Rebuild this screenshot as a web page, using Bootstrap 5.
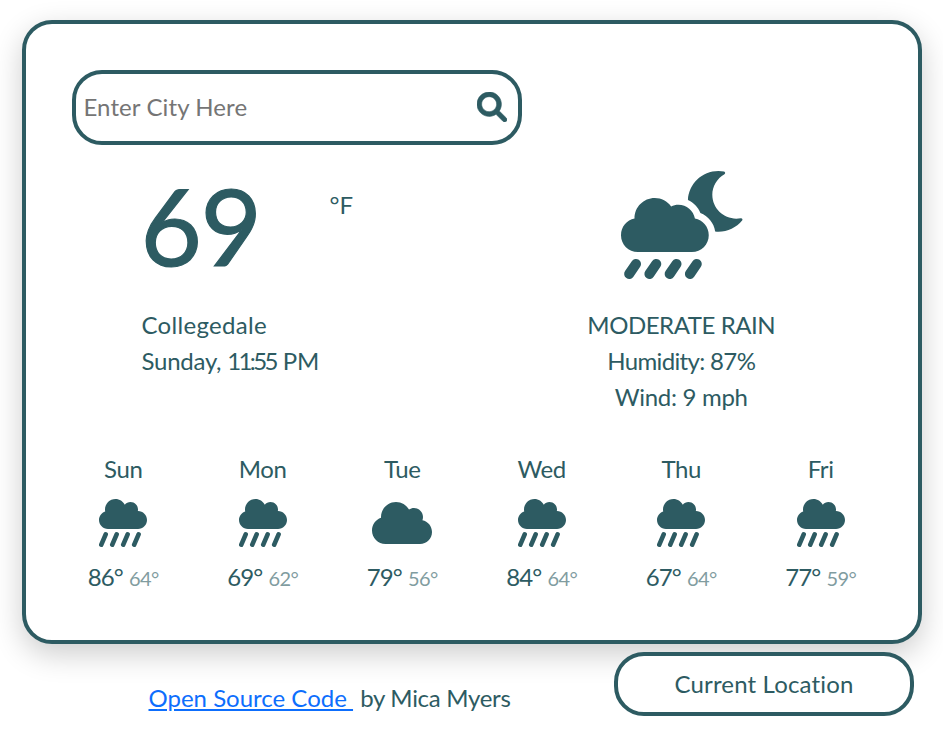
<!DOCTYPE html>
<html lang="en">
<head>
<meta charset="utf-8">
<meta name="viewport" content="width=device-width, initial-scale=1">
<title>Weather</title>
<link href="https://cdn.jsdelivr.net/npm/bootstrap@5.3.0/dist/css/bootstrap.min.css" rel="stylesheet">
<style>
  :root { --teal: #2d5b62; }
  body { font-family: Lato, "Liberation Sans", sans-serif; font-size: 24px; line-height: 36px; color: var(--teal); font-variant-ligatures: none; overflow: hidden; }
  svg { fill: currentColor; display: block; }
  .weather-app { width: 900px; height: 624px; margin-top: 20px; border: 4px solid var(--teal); border-radius: 30px; box-shadow: 0 10px 30px rgba(0,0,0,.2); padding: 46px 27px 0 28px; }
  .search-form { width: 450px; height: 75px; margin-left: 18px; border: 4px solid var(--teal); border-radius: 30px; padding: 0 11px 0 8px; }
  .search-form input { color: var(--teal); width: 360px; margin-bottom: 2px; letter-spacing: .1px; }
  .search-form input::placeholder { color: #757575; opacity: 1; }
  .search-form svg { margin-bottom: 2px; }
  .top-area { height: 162px; }
  .left-col { padding-left: 88px; }
  .temp-now { font-size: 106px; line-height: 161px; width: 187px; letter-spacing: -1.5px; text-indent: -1px; -webkit-text-stroke: 1.2px var(--teal); }
  .unit { padding: 42px 0 0 1px; }
  .top-icon { padding-top: 26px; }
  .city { letter-spacing: .3px; }
  .clock { letter-spacing: -2.6px; margin-right: 1px; }
  .when { letter-spacing: -.25px; }
  .sky { letter-spacing: -.45px; }
  .humid { letter-spacing: -.65px; }
  .wind { letter-spacing: -.3px; }
  .day-name { letter-spacing: -.4px; }
  .forecast-row { margin-top: 36px; }
  .day-icon { height: 72px; }
  .high { letter-spacing: -.9px; }
  .low { font-size: 20px; opacity: .6; letter-spacing: -.6px; }
  .page-foot { width: 900px; height: 72px; padding: 8px 8px 0 127px; }
  .location-btn { width: 300px; height: 64px; border: 4px solid var(--teal); border-radius: 30px; background: #fff; color: var(--teal); letter-spacing: .15px; padding: 0 0 0 1px; }
  .credit { padding-top: 28px; }
  .credit a { margin-right: 1px; }
  .author { letter-spacing: -.3px; }
</style>
<script src="https://cdn.jsdelivr.net/npm/bootstrap@5.3.0/dist/js/bootstrap.bundle.min.js"></script>
</head>
<body>
<svg class="d-none" aria-hidden="true">
  <symbol id="rain" viewBox="0 0 512 512"><path d="M416 128c-.6 0-1.1.2-1.6.2 1.1-5.2 1.6-10.6 1.6-16.2 0-44.2-35.8-80-80-80-24.6 0-46.3 11.3-61 28.8C256.400 24.800 219.300 0 176 0 114.100 0 64 50.100 64 112c0 7.300.8 14.300 2.100 21.200C27.800 145.800 0 181.500 0 224c0 53 43 96 96 96h320c53 0 96-43 96-96s-43-96-96-96z"/><path d="M72 376l-48 112m165-112l-48 112m165-112l-48 112m165-112l-48 112" fill="none" stroke="currentColor" stroke-width="48" stroke-linecap="round"/></symbol>
  <symbol id="cloud" viewBox="0 0 640 512"><path d="M537.6 226.6c4.1-10.7 6.400-22.400 6.400-34.600 0-53-43-96-96-96-19.700 0-38.100 6-53.300 16.200C367 64.200 315.300 32 256 32c-88.400 0-160 71.600-160 160 0 2.700.1 5.400.2 8.100C40.200 219.800 0 273.200 0 336c0 79.500 64.500 144 144 144h368c70.700 0 128-57.300 128-128 0-61.900-44-113.600-102.400-125.400z"/></symbol>
</svg>
<main class="weather-app mx-auto bg-white">
  <form class="search-form d-flex align-items-center justify-content-between">
    <input class="border-0 p-0 bg-transparent" type="text" placeholder="Enter City Here">
    <svg width="30" height="30" viewBox="0 0 512 512"><path d="M500.300 443.700l-119.700-119.700c27.220-40.410 40.650-90.900 33.460-144.700C401.800 87.790 326.800 13.320 235.200 1.723C99.010-15.510-15.510 99.010 1.724 235.200c11.600 91.640 86.080 166.700 177.600 178.900c53.800 7.189 104.300-6.236 144.700-33.460l119.700 119.700c15.620 15.620 40.950 15.620 56.570 0C515.900 484.700 515.900 459.300 500.300 443.700zM79.100 208c0-70.580 57.420-128 128-128s128 57.420 128 128c0 70.580-57.420 128-128 128S79.100 278.600 79.100 208z" stroke="currentColor" stroke-width="10"/></svg>
  </form>
  <div class="row g-0">
    <div class="col-6 left-col">
      <div class="top-area d-flex"><div class="temp-now">69</div><div class="unit">°F</div></div>
      <div class="city">Collegedale</div>
      <div class="when">Sunday, <span class="clock">11:55</span> PM</div>
    </div>
    <div class="col-6 text-center">
      <div class="top-area top-icon d-flex justify-content-center align-items-start">
        <svg width="121.5" height="108" viewBox="0 0 576 512" overflow="visible"><path d="M350.500 225.500c-6.900-37.200-39.300-65.500-78.500-65.500-12.300 0-23.900 3-34.300 8-17.400-24.100-45.600-40-77.700-40-53 0-96 43-96 96 0 .5.2 1.100.2 1.600C27.600 232.900 0 265.200 0 304c0 44.200 35.800 80 80 80h256c44.200 0 80-35.800 80-80 0-39.200-28.200-71.700-65.500-78.500zm217.400-1.700c-70.400 13.300-135-40.300-135-110.800 0-40.600 21.900-78 57.500-98.100 5.500-3.100 4.100-11.400-2.100-12.500C479.600.8 470.700 0 461.800 0c-77.900 0-141.100 61.200-144.400 137.900 26.700 11.900 48.200 33.800 58.900 61.700 37.100 14.300 64 47.400 70.200 86.800 5.100.5 10 1.500 15.200 1.500 44.700 0 85.600-20.200 112.600-53.300 4.200-4.800-.2-12-6.400-10.800z"/><path d="M71 441l-32 47m128-47l-32 47m128-47l-32 47m128-47l-32 47" fill="none" stroke="currentColor" stroke-width="48" stroke-linecap="round"/></svg>
      </div>
      <div class="sky">MODERATE RAIN</div>
      <div class="humid">Humidity: 87%</div>
      <div class="wind">Wind: 9 mph</div>
    </div>
  </div>
  <div class="row g-0 text-center forecast-row">
    <div class="col-2"><div class="day-name">Sun</div><div class="day-icon d-flex align-items-center justify-content-center"><svg width="48" height="48"><use href="#rain"/></svg></div><div><span class="high">86°</span> <span class="low">64°</span></div></div>
    <div class="col-2"><div class="day-name">Mon</div><div class="day-icon d-flex align-items-center justify-content-center"><svg width="48" height="48"><use href="#rain"/></svg></div><div><span class="high">69°</span> <span class="low">62°</span></div></div>
    <div class="col-2"><div class="day-name">Tue</div><div class="day-icon d-flex align-items-center justify-content-center"><svg width="60" height="48"><use href="#cloud"/></svg></div><div><span class="high">79°</span> <span class="low">56°</span></div></div>
    <div class="col-2"><div class="day-name">Wed</div><div class="day-icon d-flex align-items-center justify-content-center"><svg width="48" height="48"><use href="#rain"/></svg></div><div><span class="high">84°</span> <span class="low">64°</span></div></div>
    <div class="col-2"><div class="day-name">Thu</div><div class="day-icon d-flex align-items-center justify-content-center"><svg width="48" height="48"><use href="#rain"/></svg></div><div><span class="high">67°</span> <span class="low">64°</span></div></div>
    <div class="col-2"><div class="day-name">Fri</div><div class="day-icon d-flex align-items-center justify-content-center"><svg width="48" height="48"><use href="#rain"/></svg></div><div><span class="high">77°</span> <span class="low">59°</span></div></div>
  </div>
</main>
<footer class="page-foot mx-auto d-flex justify-content-between">
  <div class="credit"><a href="#">Open Source Code&nbsp;</a> <span class="author">by Mica Myers</span></div>
  <button class="location-btn" type="button">Current Location</button>
</footer>
</body>
</html>
